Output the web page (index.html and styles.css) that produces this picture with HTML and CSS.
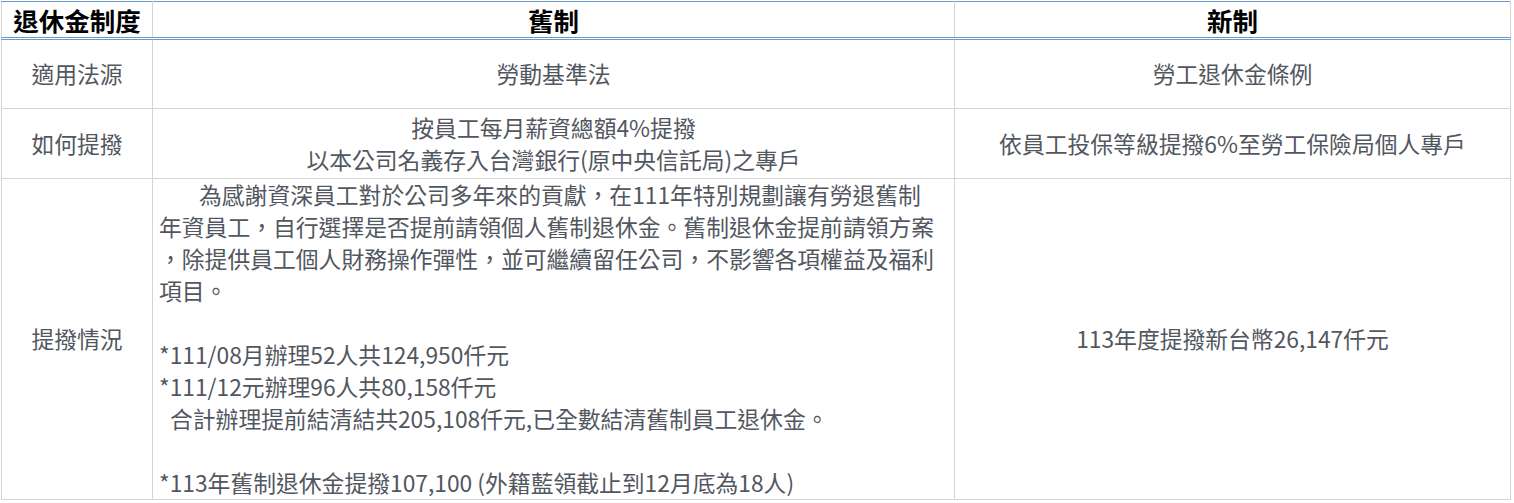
FILE: index.html
```html
<!DOCTYPE html>
<html lang="zh-Hant">
<head>
<meta charset="utf-8">
<title>退休金制度</title>
<link rel="stylesheet" href="styles.css">
</head>
<body>
<div class="wrap">
<table class="pension">
  <colgroup>
    <col class="c1">
    <col class="c2">
    <col class="c3">
  </colgroup>
  <thead>
    <tr>
      <th>退休金制度</th>
      <th>舊制</th>
      <th>新制</th>
    </tr>
  </thead>
  <tbody>
    <tr class="r1">
      <td>適用法源</td>
      <td>勞動基準法</td>
      <td>勞工退休金條例</td>
    </tr>
    <tr class="r2">
      <td>如何提撥</td>
      <td>按員工每月薪資總額4%提撥<br>以本公司名義存入台灣銀行(原中央信託局)之專戶</td>
      <td>依員工投保等級提撥6%至勞工保險局個人專戶</td>
    </tr>
    <tr class="r3">
      <td>提撥情況</td>
      <td class="left"><span class="indent"></span>為感謝資深員工對於公司多年來的貢獻，在111年特別規劃讓有勞退舊制<br>年資員工，自行選擇是否提前請領個人舊制退休金。舊制退休金提前請領方案<br>，除提供員工個人財務操作彈性，並可繼續留任公司，不影響各項權益及福利<br>項目。<br><br>*111/08月辦理52人共124,950仟元<br>*111/12元辦理96人共80,158仟元<br><span class="sp"></span>合計辦理提前結清結共205,108仟元,已全數結清舊制員工退休金。<br><br>*113年舊制退休金提撥107,100 (外籍藍領截止到12月底為18人)</td>
      <td>113年度提撥新台幣26,147仟元</td>
    </tr>
  </tbody>
</table>
</div>
</body>
</html>
```

FILE: styles.css
```css
html, body {
  margin: 0;
  padding: 0;
  background: #ffffff;
}

.wrap {
  padding: 1px 0 0 1px;
}

.pension {
  border-collapse: collapse;
  table-layout: fixed;
  width: 1509px;
  font-family: "Noto Sans CJK TC", "Noto Sans", sans-serif;
  color: #52575f;
}

.c1 { width: 151px; }
.c2 { width: 802px; }
.c3 { width: 556px; }

.pension th,
.pension td {
  border: 1px solid #d4d4d4;
  text-align: center;
  vertical-align: middle;
  padding: 0;
}

.pension th {
  border-top: 1px solid #6c9ac8;
  border-bottom: 3px double #6c9ac8;
  height: 35px;
  font-size: 25.5px;
  line-height: 35px;
  font-weight: 700;
  color: #000000;
}

.pension td {
  font-size: 22.8px;
  line-height: 32px;
}

.r1 td { height: 68px; }
.r2 td { height: 69px; }
.r3 td { height: 320px; }

.pension td.left {
  text-align: left;
  padding-left: 6px;
  white-space: nowrap;
}

.indent {
  display: inline-block;
  width: 40px;
}

.sp {
  display: inline-block;
  width: 11px;
}
```
